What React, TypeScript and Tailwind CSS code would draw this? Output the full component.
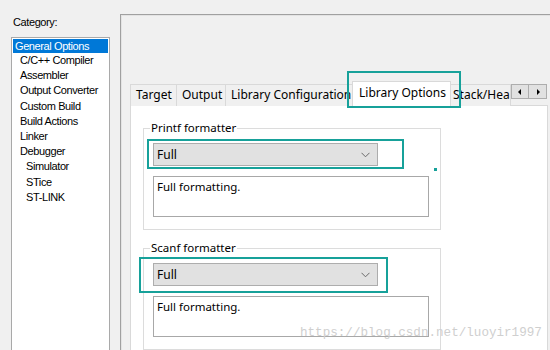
import React from "react";

const teal = "border-[#17a19a]";

function Combo() {
  return (
    <div className="h-[23px] w-[225px] bg-[#e1e1e1] border border-[#adadad] flex items-center justify-between pl-[3px] pr-[6px]">
      <span className="text-[12px] leading-none">Full</span>
      <svg width="9" height="6" viewBox="0 0 9 6" className="mr-[1px]">
        <path d="M0.5 0.8 L4.5 4.8 L8.5 0.8" fill="none" stroke="#6a6a6a" strokeWidth="1" />
      </svg>
    </div>
  );
}

function Group({ title, top }: { title: string; top: string }) {
  return (
    <div className={`relative border border-[#dcdcdc] w-[298px] h-[102px] ${top}`}>
      <span className="absolute left-[6px] top-[-9px] bg-white px-[1px] text-[11.5px] leading-[16px]">{title}</span>
      <div className="pl-[9px] pt-[14px] flex flex-col gap-[10px]">
        <Combo />
        <div className="h-[41px] w-[276px] border border-[#a8a8a8] bg-white pl-[3px] pt-[2px] text-[11.5px] leading-[16px]">
          Full formatting.
        </div>
      </div>
    </div>
  );
}

export default function App() {
  const cats: [string, number][] = [
    ["C/C++ Compiler", 20],
    ["Assembler", 20],
    ["Output Converter", 20],
    ["Custom Build", 20],
    ["Build Actions", 20],
    ["Linker", 20],
    ["Debugger", 20],
    ["Simulator", 26],
    ["STice", 26],
    ["ST-LINK", 26],
  ];
  return (
    <div
      className="relative w-[550px] h-[350px] overflow-hidden bg-[#f0f0f0] text-black flex"
      style={{ fontFamily: '"Noto Sans", "Open Sans", sans-serif' }}
    >
      {/* Left category column */}
      <div
        className="w-[120px] shrink-0 pl-[11px] pt-[15px] flex flex-col tracking-[-0.4px]"
        style={{ fontFamily: '"Liberation Sans", Arial, sans-serif' }}
      >
        <div className="text-[11px] leading-[14px] pl-[2px] h-[22px]">Category:</div>
        <div className="w-[99px] flex-1 bg-white border border-[#a9a9a9] border-b-0 pt-[1px] px-[1px]">
          <div className="h-[14px] bg-[#0078d7] text-white text-[11px] leading-[14px] pl-[2px] whitespace-nowrap">General Options</div>
          {cats.map(([c, x]) => (
            <div key={c} className="h-[15.2px] text-[11px] leading-[15px] whitespace-nowrap" style={{ paddingLeft: x - 13 }}>
              {c}
            </div>
          ))}
        </div>
      </div>

      {/* Right panel */}
      <div className="flex-1 mt-[14px] border-l border-t border-[#a0a0a0] shadow-[inset_1px_1px_0_#e3e3e3] pl-[9px] pt-[66px] flex flex-col">
        {/* Tab row */}
        <div className="flex items-end h-[25px] relative z-10">
          <div className="h-[22px] w-[47px] border border-[#d9d9d9] border-b-0 bg-[#f0f0f0] text-[12px] leading-[20px] pl-[5px]">Target</div>
          <div className="h-[22px] w-[49px] border border-[#d9d9d9] border-b-0 border-l-0 bg-[#f0f0f0] text-[12px] leading-[20px] pl-[5px]">Output</div>
          <div className="h-[22px] w-[127px] border border-[#d9d9d9] border-b-0 border-l-0 bg-[#f0f0f0] text-[12px] leading-[20px] pl-[5px] overflow-hidden whitespace-nowrap">Library Configuration</div>
          <div className="h-[25px] w-[99px] -ml-[1px] border border-[#d9d9d9] border-b-0 bg-white text-[12px] leading-[21px] pl-[6px] whitespace-nowrap">Library Options</div>
          <div className="h-[22px] w-[60px] border border-[#d9d9d9] border-b-0 border-l-0 bg-[#f0f0f0] text-[12px] leading-[20px] pl-[2px] overflow-hidden whitespace-nowrap">Stack/Heap</div>
          <div className="self-start mt-[3px] flex h-[15px]">
            <div className="w-[18px] h-[15px] border border-[#adadad] bg-[#e1e1e1] flex items-center justify-center">
              <svg width="4" height="6" viewBox="0 0 4 6"><path d="M3 0 L0 3 L3 6 Z" fill="#000" /></svg>
            </div>
            <div className="w-[18px] h-[15px] border border-l-0 border-[#adadad] bg-[#e1e1e1] flex items-center justify-center">
              <svg width="4" height="6" viewBox="0 0 4 6"><path d="M1 0 L4 3 L1 6 Z" fill="#000" /></svg>
            </div>
          </div>
        </div>
        {/* Content */}
        <div className="-mt-[1px] w-[418px] flex-1 bg-white border border-[#d9d9d9] pl-[12px] pt-[22px] flex flex-col">
          <Group title="Printf formatter" top="" />
          <Group title="Scanf formatter" top="mt-[18px]" />
        </div>
      </div>

      {/* Annotation overlays */}
      <div className={`absolute left-[347px] top-[71px] w-[114px] h-[37px] border-2 ${teal} z-20`} />
      <div className={`absolute left-[147px] top-[139px] w-[257px] h-[30px] border-2 ${teal}`} />
      <div className={`absolute left-[139px] top-[257px] w-[249px] h-[36px] border-2 ${teal}`} />
      <div className="absolute left-[434px] top-[168px] w-[3px] h-[3px] bg-[#17a19a]" />
      <div
        className="absolute left-[300px] top-[325px] text-[12.6px] leading-[16px] text-[#cfcfcf] whitespace-nowrap"
        style={{ fontFamily: '"Liberation Mono", monospace' }}
      >
        https://blog.csdn.net/luoyir1997
      </div>
    </div>
  );
}
